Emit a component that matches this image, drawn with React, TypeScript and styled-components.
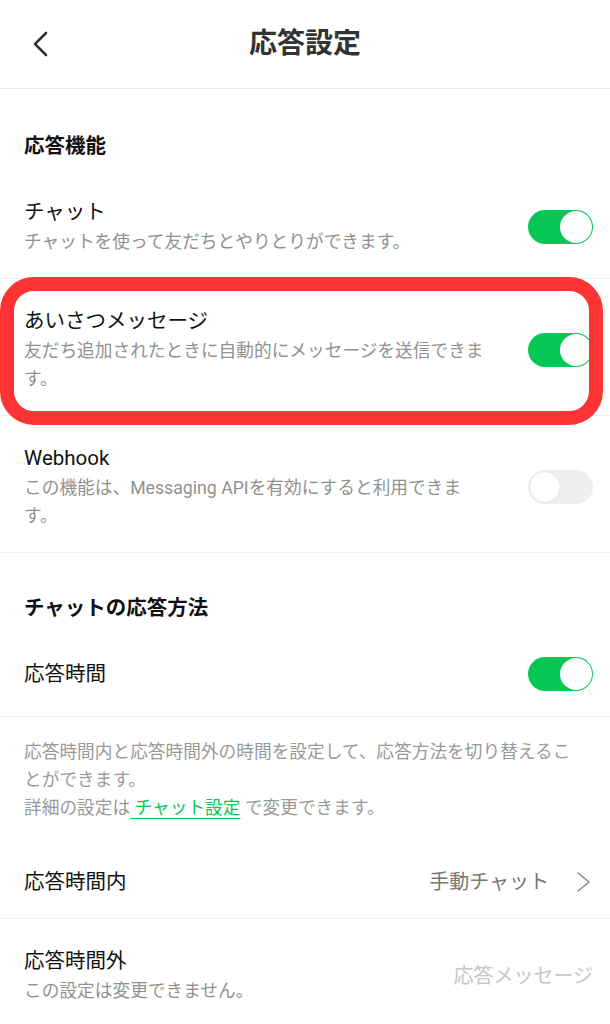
import styled, { createGlobalStyle } from "styled-components";

const GlobalStyle = createGlobalStyle`
  html, body {
    margin: 0;
    padding: 0;
    background: #fff;
  }
  body {
    font-family: Roboto, "Noto Sans CJK JP", sans-serif;
    color: #111;
    -webkit-font-smoothing: antialiased;
  }
`;

const Page = styled.div`
  width: 100%;
  height: 100vh;
  overflow: hidden;
  background: #fff;
`;

const Header = styled.header`
  height: 89px;
  box-sizing: border-box;
  display: grid;
  grid-template-columns: 80px 1fr 80px;
  align-items: center;
  border-bottom: 1px solid #e6e6e6;
`;

const BackButton = styled.button`
  display: flex;
  align-items: center;
  padding: 0 0 0 30px;
  border: none;
  background: none;
  color: #333;
`;

const Title = styled.h1`
  margin: 0;
  text-align: center;
  font-size: 28px;
  font-weight: 700;
  line-height: 40px;
  color: #333;
`;

const SectionHead = styled.h2<{ $pt: number }>`
  margin: 0;
  padding: ${(p) => p.$pt}px 24px 10px;
  font-size: 20.5px;
  font-weight: 700;
  line-height: 28px;
  color: #111;
`;

const Row = styled.div<{ $pt?: number; $pb?: number; $divider?: boolean }>`
  position: relative;
  display: flex;
  align-items: center;
  gap: 38px;
  padding: ${(p) => p.$pt ?? 28}px 17px ${(p) => p.$pb ?? 22}px 24px;
  border-bottom: ${(p) => (p.$divider ? "1px solid #f0f0f0" : "none")};
`;

const Texts = styled.div`
  flex: 1;
  min-width: 0;
`;

const Label = styled.div`
  font-size: 20.5px;
  line-height: 28px;
  color: #111;
`;

const Desc = styled.div`
  margin-top: 2px;
  font-size: 17.7px;
  line-height: 28px;
  color: #919191;
`;

const Value = styled.span<{ $muted?: boolean }>`
  display: flex;
  align-items: center;
  gap: 26px;
  font-size: 20px;
  line-height: 28px;
  color: ${(p) => (p.$muted ? "#c6c6c6" : "#777")};
`;

const Track = styled.span<{ $on: boolean }>`
  flex: none;
  position: relative;
  width: 65px;
  height: 34px;
  border-radius: 17px;
  background: ${(p) => (p.$on ? "#06c755" : "#efefef")};
`;

const Knob = styled.span<{ $on: boolean }>`
  position: absolute;
  top: 1px;
  left: ${(p) => (p.$on ? "32px" : "1px")};
  width: 32px;
  height: 32px;
  box-sizing: border-box;
  border-radius: 50%;
  background: #fff;
  border: ${(p) => (p.$on ? "none" : "1px solid #e4e4e4")};
`;

const Highlight = styled.div`
  position: absolute;
  top: -2px;
  left: 0;
  right: 7px;
  bottom: -10px;
  border: 14px solid #fe3434;
  border-radius: 34px;
  pointer-events: none;
`;

const Note = styled.p`
  margin: 0;
  padding: 21px 24px 18px;
  font-size: 17.7px;
  line-height: 28px;
  color: #999;
`;

const Link = styled.a`
  color: #06c755;
  text-decoration: underline;
  text-underline-offset: 4px;
`;

function Toggle({ on }: { on: boolean }) {
  return (
    <Track $on={on}>
      <Knob $on={on} />
    </Track>
  );
}

function Chevron() {
  return (
    <svg width="18" height="24" viewBox="0 0 18 24" fill="none">
      <path d="M3 3 L14 12 L3 21" stroke="#888" strokeWidth="1.6" strokeLinecap="round" strokeLinejoin="round" />
    </svg>
  );
}

export default function App() {
  return (
    <Page>
      <GlobalStyle />
      <Header>
        <BackButton aria-label="戻る">
          <svg width="20" height="28" viewBox="0 0 20 28" fill="none">
            <path d="M16 3 L5 14 L16 25" stroke="#333" strokeWidth="2.6" strokeLinecap="round" strokeLinejoin="round" />
          </svg>
        </BackButton>
        <Title>応答設定</Title>
        <span />
      </Header>

      <SectionHead $pt={43}>応答機能</SectionHead>
      <Row $divider>
        <Texts>
          <Label>チャット</Label>
          <Desc>チャットを使って友だちとやりとりができます。</Desc>
        </Texts>
        <Toggle on />
      </Row>
      <Row $divider>
        <Texts>
          <Label>あいさつメッセージ</Label>
          <Desc>友だち追加されたときに自動的にメッセージを送信できます。</Desc>
        </Texts>
        <Toggle on />
        <Highlight />
      </Row>
      <Row $divider>
        <Texts>
          <Label>Webhook</Label>
          <Desc>この機能は、Messaging APIを有効にすると利用できます。</Desc>
        </Texts>
        <Toggle on={false} />
      </Row>

      <SectionHead $pt={41}>チャットの応答方法</SectionHead>
      <Row $divider $pt={25} $pb={25}>
        <Texts>
          <Label>応答時間</Label>
        </Texts>
        <Toggle on />
      </Row>
      <Note>
        応答時間内と応答時間外の時間を設定して、応答方法を切り替えることができます。
        <br />
        詳細の設定は<Link href="#">&nbsp;チャット設定</Link> で変更できます。
      </Note>
      <Row $divider>
        <Texts>
          <Label>応答時間内</Label>
        </Texts>
        <Value>
          手動チャット
          <Chevron />
        </Value>
      </Row>
      <Row>
        <Texts>
          <Label>応答時間外</Label>
          <Desc>この設定は変更できません。</Desc>
        </Texts>
        <Value $muted>応答メッセージ</Value>
      </Row>
    </Page>
  );
}
